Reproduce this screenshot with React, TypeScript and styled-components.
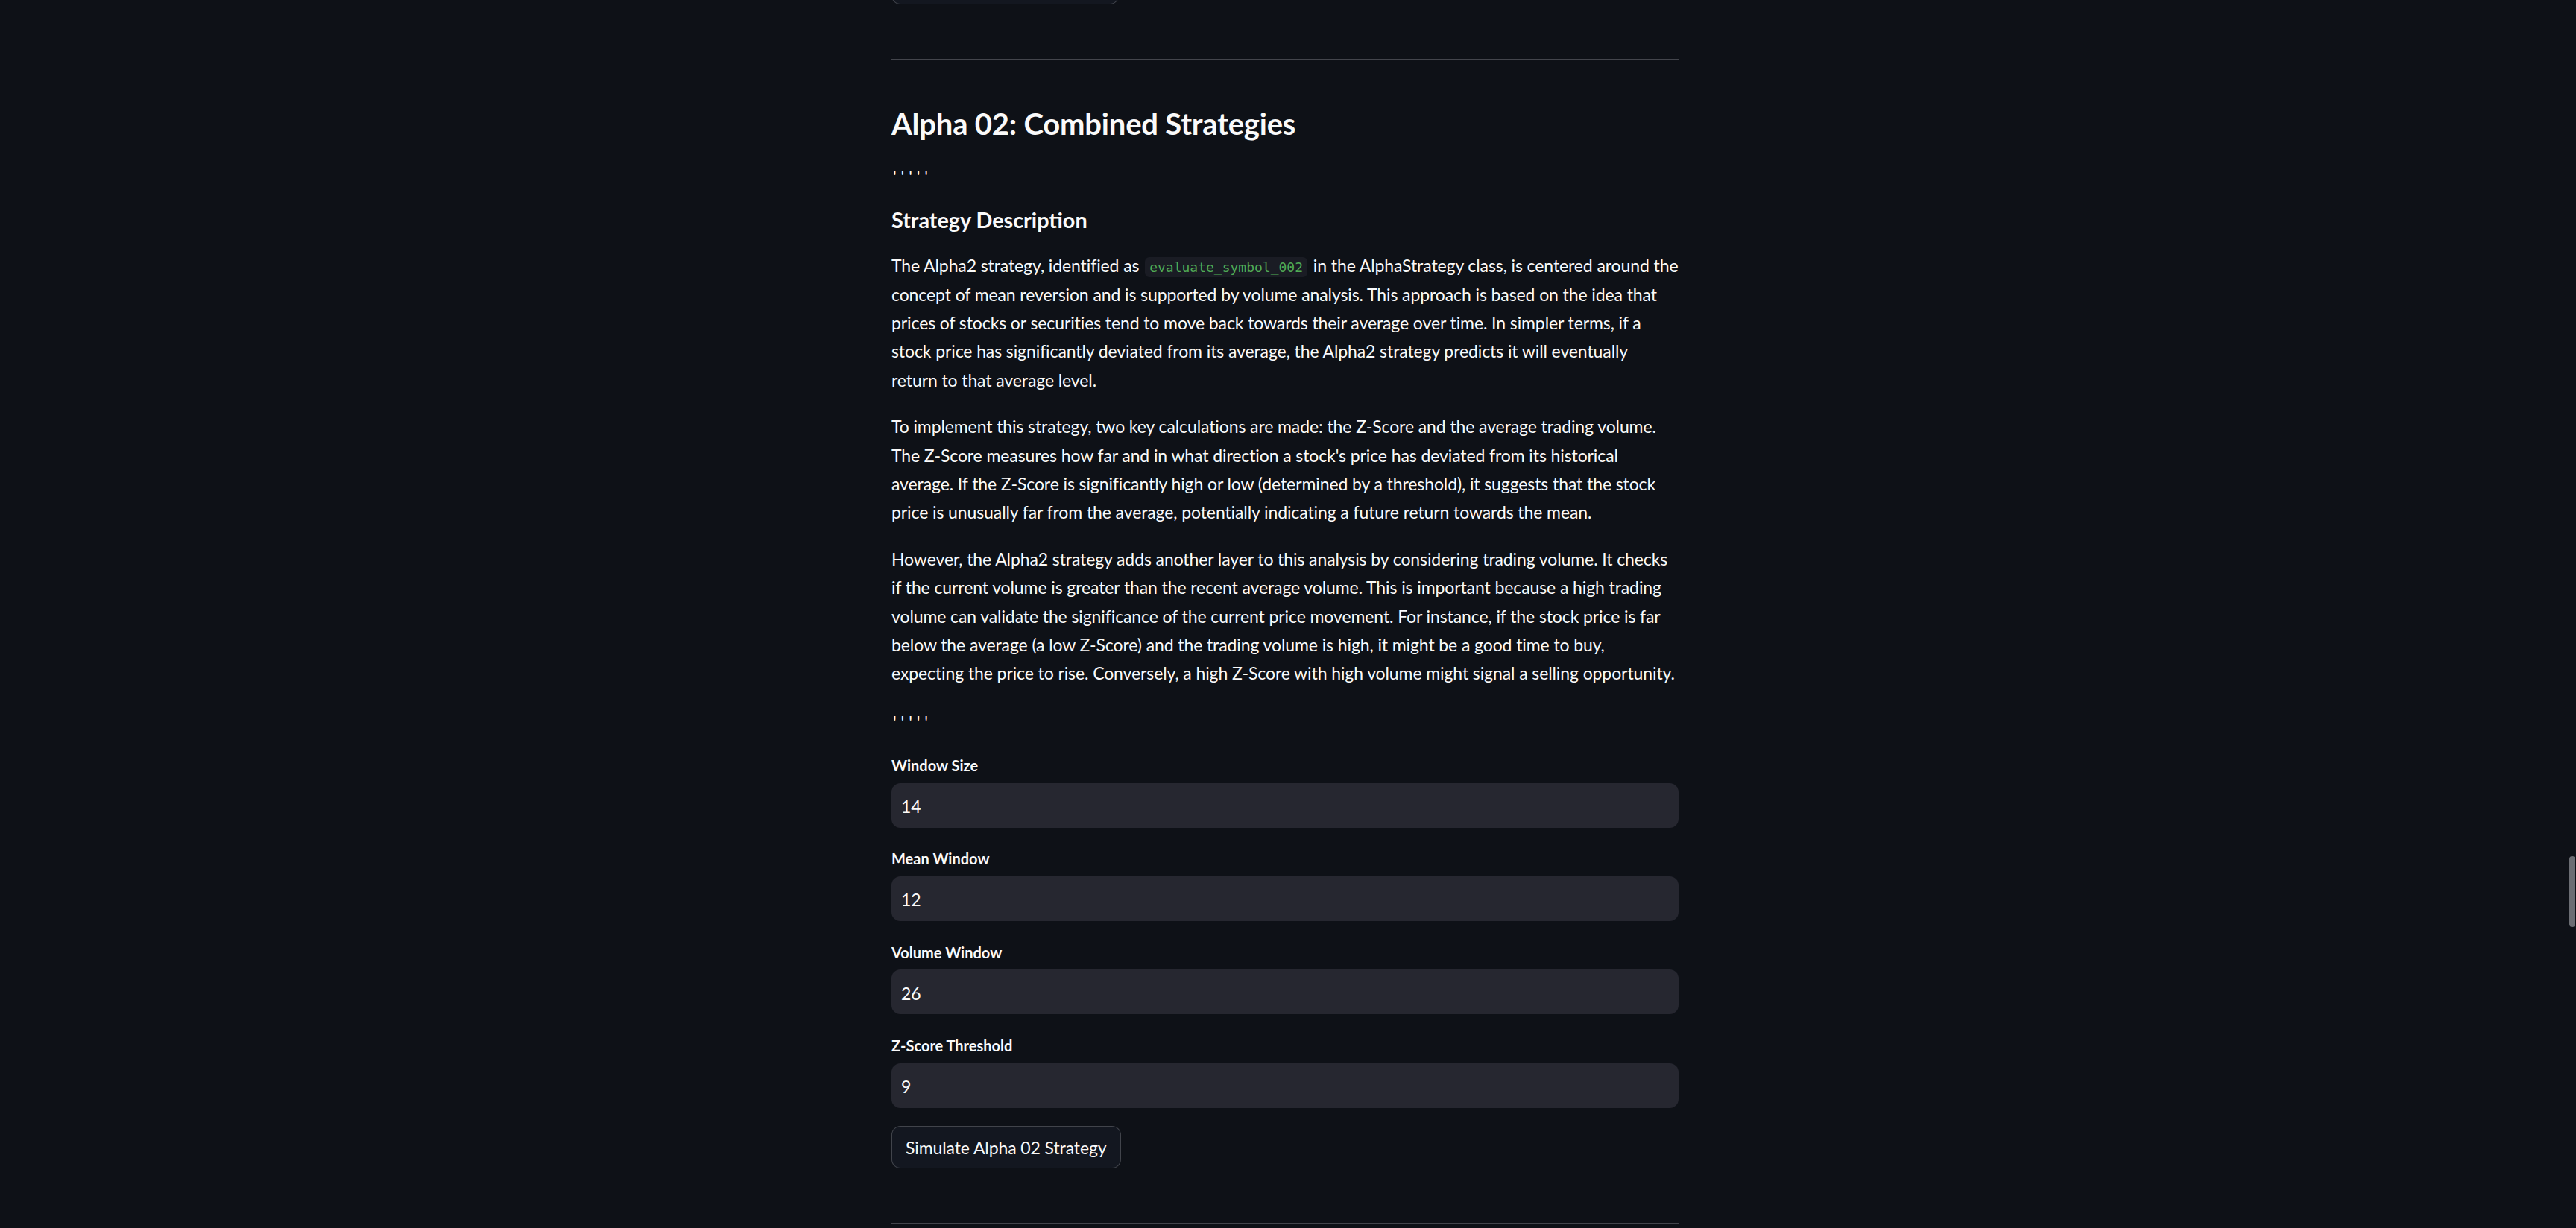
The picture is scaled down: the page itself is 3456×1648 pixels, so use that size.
import React, { FC } from 'react';
import styled, { createGlobalStyle } from 'styled-components';

const GlobalStyle = createGlobalStyle`
  html, body {
    margin: 0;
    padding: 0;
    background: #0e1117;
    overflow: hidden;
  }
`;

const paragraphs: string[][] = [
  [
    '@@CODE@@',
    'concept of mean reversion and is supported by volume analysis. This approach is based on the idea that',
    'prices of stocks or securities tend to move back towards their average over time. In simpler terms, if a',
    'stock price has significantly deviated from its average, the Alpha2 strategy predicts it will eventually',
    'return to that average level.',
  ],
  [
    'To implement this strategy, two key calculations are made: the Z-Score and the average trading volume.',
    "The Z-Score measures how far and in what direction a stock's price has deviated from its historical",
    'average. If the Z-Score is significantly high or low (determined by a threshold), it suggests that the stock',
    'price is unusually far from the average, potentially indicating a future return towards the mean.',
  ],
  [
    'However, the Alpha2 strategy adds another layer to this analysis by considering trading volume. It checks',
    'if the current volume is greater than the recent average volume. This is important because a high trading',
    'volume can validate the significance of the current price movement. For instance, if the stock price is far',
    'below the average (a low Z-Score) and the trading volume is high, it might be a good time to buy,',
    'expecting the price to rise. Conversely, a high Z-Score with high volume might signal a selling opportunity.',
  ],
];

const fields = [
  { label: 'Window Size', value: '14' },
  { label: 'Mean Window', value: '12' },
  { label: 'Volume Window', value: '26' },
  { label: 'Z-Score Threshold', value: '9' },
];

const App: FC = () => {
  return (
    <Page>
      <GlobalStyle />
      <Column>
        <Button $clipped aria-label="Simulate Alpha 01 Strategy" />
        <Divider />
        <Heading>Alpha 02: Combined Strategies</Heading>
        <Quotes>' ' ' ' '</Quotes>
        <SubHeading>Strategy Description</SubHeading>
        {paragraphs.map((lines, i) => (
          <Paragraph key={i}>
            {lines.map((line, j) =>
              line === '@@CODE@@' ? (
                <Line key={j}>
                  The Alpha2 strategy, identified as <Code>evaluate_symbol_002</Code> in the
                  AlphaStrategy class, is centered around the
                </Line>
              ) : (
                <Line key={j}>{line}</Line>
              )
            )}
          </Paragraph>
        ))}
        <Quotes>' ' ' ' '</Quotes>
        {fields.map((f) => (
          <Field key={f.label}>
            <Label>{f.label}</Label>
            <Input type="text" defaultValue={f.value} />
          </Field>
        ))}
        <Button>Simulate Alpha 02 Strategy</Button>
        <Divider />
      </Column>
      <ScrollThumb />
    </Page>
  );
};
export default App;

const Page = styled.div`
  height: 1648px;
  padding-right: 8px;
  background: #0e1117;
  color: #fafafa;
  font-family: Lato, 'Liberation Sans', sans-serif;
  overflow: hidden;
`;

const Column = styled.div`
  width: 1056px;
  margin: 0 auto;
  display: flex;
  flex-direction: column;
  gap: 24px;
`;

const Button = styled.button<{ $clipped?: boolean }>`
  align-self: flex-start;
  width: ${(p) => (p.$clipped ? '305px' : 'auto')};
  height: 57.6px;
  margin-top: ${(p) => (p.$clipped ? '-51.6px' : '0')};
  padding: 2px 18px 0;
  border: 1.5px solid rgba(250, 250, 250, 0.2);
  border-radius: 12px;
  background: #131720;
  color: #fafafa;
  font-family: inherit;
  font-size: 23px;
  letter-spacing: -0.1px;
  line-height: 1;
`;

const Divider = styled.hr`
  margin: 49px 0 36.5px;
  border: none;
  border-top: 1px solid #43454c;
  height: 0;
`;

const Heading = styled.h3`
  margin: 0;
  font-size: 40px;
  line-height: 50.4px;
  font-weight: 700;
  letter-spacing: -0.2px;
`;

const SubHeading = styled.h5`
  margin: 0;
  font-size: 28.8px;
  line-height: 36px;
  font-weight: 700;
`;

const Quotes = styled.p`
  margin: 3px 0 -3px;
  padding-left: 2px;
  font-size: 23px;
  line-height: 38.4px;
  white-space: pre;
`;

const Paragraph = styled.p`
  margin: 0;
  font-size: 23px;
  line-height: 38.4px;
  letter-spacing: -0.1px;
`;

const Line = styled.span`
  display: block;
  height: 38.4px;
  white-space: nowrap;
`;

const Code = styled.code`
  padding: 3px 6px;
  margin: 0 2px;
  border-radius: 6px;
  background: #1a1c24;
  color: #50aa55;
  font-family: 'DejaVu Sans Mono', 'Liberation Mono', monospace;
  font-size: 18px;
  line-height: 1;
  letter-spacing: 0;
`;

const Field = styled.div`
  display: flex;
  flex-direction: column;
  gap: 6px;
`;

const Label = styled.label`
  height: 35.4px;
  display: flex;
  align-items: center;
  font-size: 20px;
  font-weight: 700;
`;

const Input = styled.input`
  box-sizing: border-box;
  width: 100%;
  height: 60px;
  padding: 3px 13px 0;
  border: none;
  border-radius: 12px;
  background: #262730;
  color: #fafafa;
  font-family: inherit;
  font-size: 23px;
  outline: none;
`;

const ScrollThumb = styled.div`
  position: fixed;
  left: 3447px;
  top: 1149px;
  width: 8px;
  height: 95px;
  border-radius: 4px;
  background: #6b6d73;
`;
